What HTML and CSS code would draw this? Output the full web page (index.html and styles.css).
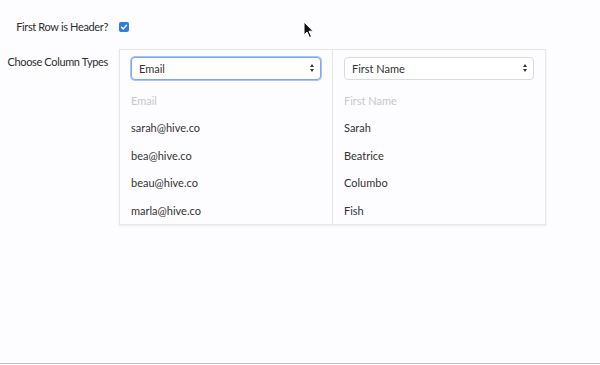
FILE: index.html
```html
<!DOCTYPE html>
<html>
<head>
<meta charset="utf-8"/>
<title>Import</title>
<link rel="stylesheet" href="styles.css">
</head>
<body>
<div class="importer">
	<div class="field">
		<div class="field-label"><span>First Row is Header?</span></div>
		<span class="check"><svg width="10" height="10" viewBox="0 0 10 10"><path d="M2.6 5.2 L4.3 6.9 L7.5 3.2" fill="none" stroke="#fff" stroke-width="1.4" stroke-linecap="round" stroke-linejoin="round"/></svg></span>
	</div>
	<div class="field">
		<div class="field-label types-label"><span>Choose Column Types</span></div>
		<div class="columns">
			<div class="column">
				<div class="pick focused">Email<span class="arrows"></span></div>
				<ul>
					<li class="head">Email</li>
					<li>sarah@hive.co</li>
					<li>bea@hive.co</li>
					<li>beau@hive.co</li>
					<li>marla@hive.co</li>
				</ul>
			</div>
			<div class="column">
				<div class="pick">First Name<span class="arrows"></span></div>
				<ul>
					<li class="head">First Name</li>
					<li>Sarah</li>
					<li>Beatrice</li>
					<li>Columbo</li>
					<li>Fish</li>
				</ul>
			</div>
		</div>
	</div>
</div>
<svg class="cursor" width="12" height="18" viewBox="0 0 12 18"><path d="M1 1 L1 14 L4 11 L6.5 16.5 L8.5 15.6 L6 10.2 L10 10.2 Z" fill="#111" stroke="#fff" stroke-width="1"/></svg>
<div class="foot-line"></div>
</body>
</html>
```
FILE: styles.css
```css
html,body{margin:0;padding:0;height:100%;}
body{background-color:#fdfcff;font-family:Lato,"Noto Sans",Arial,sans-serif;color:#333;position:relative;overflow:hidden;}
.importer{padding:14px 0 0 8px;}
.field{display:flex;align-items:flex-start;gap:11px;}
.field + .field{margin-top:9px;}
.field-label{display:flex;justify-content:flex-end;width:100px;white-space:nowrap;font-size:11px;letter-spacing:-0.35px;line-height:26px;color:#2e2e2e;}
.types-label{margin-top:0;}
.check{display:flex;align-items:center;justify-content:center;width:10px;height:10px;margin-top:8px;background-color:#2f7de1;border-radius:2px;}
.columns{display:flex;width:425px;border:1px solid #e6e6ea;box-shadow:0 1px 2px rgba(0,0,0,0.08);background-color:#fdfcff;}
.column{flex:1;padding:7px 11px 0 11px;}
.column + .column{border-left:1px solid #e6e6ea;}
.pick{position:relative;height:21px;line-height:21px;padding:0 7px;font-size:11px;color:#333;border:1px solid #dcdce0;border-radius:4px;background-color:#fff;}
.pick.focused{border-color:#7ea6ee;box-shadow:0 0 0 1px #a9c4f5;}
.arrows{position:absolute;right:6px;top:6px;width:0;height:0;border-left:2.5px solid transparent;border-right:2.5px solid transparent;border-bottom:3px solid #333;}
.arrows:after{content:"";position:absolute;left:-2.5px;top:5px;border-left:2.5px solid transparent;border-right:2.5px solid transparent;border-top:3px solid #333;}
.column ul{list-style:none;margin:7px 0 0 0;padding:0;}
.column li{height:27.4px;line-height:27.4px;font-size:11px;color:#333;}
.column li.head{color:#c8c8cc;}
.cursor{position:absolute;left:303px;top:21px;}
.foot-line{position:absolute;left:0;right:0;bottom:1px;height:1px;background-color:#c4c4c4;}
```
